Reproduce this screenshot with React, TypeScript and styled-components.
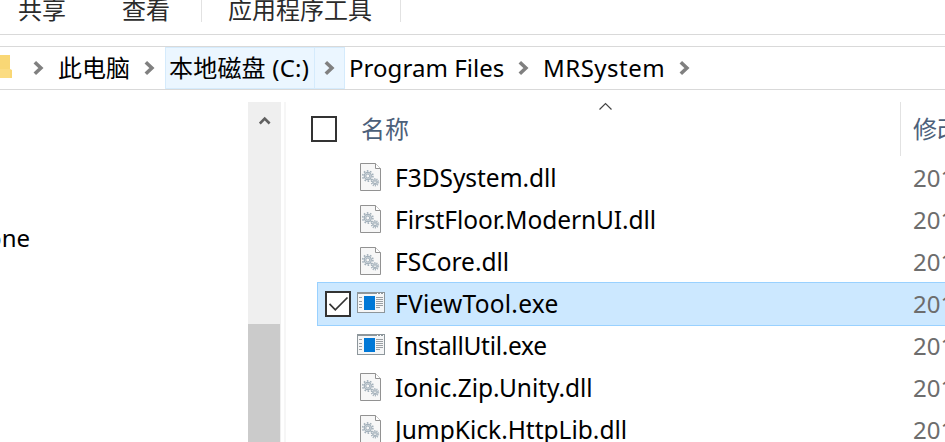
import React from "react";
import styled, { createGlobalStyle, css } from "styled-components";

const Global = createGlobalStyle`
  * { box-sizing: border-box; }
  body {
    margin: 0;
    background: #fff;
    font-family: "Noto Sans", "Noto Sans CJK SC", sans-serif;
    font-size: 24px;
    color: #000;
  }
  svg { display: block; flex: none; }
`;

const Window = styled.div`
  width: 945px;
  height: 442px;
  overflow: hidden;
  display: flex;
  flex-direction: column;
  background: #fff;
  white-space: nowrap;
`;

const Ribbon = styled.header`
  height: 35px;
  flex: none;
  display: flex;
  align-items: flex-start;
  border-bottom: 1px solid #d9d9d9;
  color: #2b2b2b;
`;

const RibbonTab = styled.div<{ $width: number; $inset: number; $divided?: boolean }>`
  width: ${(p) => p.$width}px;
  height: 22px;
  padding-left: ${(p) => p.$inset}px;
  font-family: "Noto Sans CJK SC", sans-serif;
  line-height: 36px;
  ${(p) => p.$divided && css`border-right: 1px solid #e2e2e2;`}
  & > span { display: block; margin-top: -9px; }
`;

const AddressBar = styled.nav`
  height: 44px;
  flex: none;
  margin-top: 11px;
  display: flex;
  align-items: stretch;
  border-top: 1px solid #d9d9d9;
  border-bottom: 1px solid #d9d9d9;
`;

const FolderSlot = styled.div`
  width: 21px;
  padding-top: 8px;
`;

const Crumb = styled.div<{ $width: number; $inset: number; $spacing?: number; $hot?: boolean }>`
  width: ${(p) => p.$width}px;
  padding-left: ${(p) => p.$inset}px;
  line-height: 42px;
  letter-spacing: ${(p) => p.$spacing ?? 0}px;
  ${(p) => p.$hot && css`
    background: #ebf6ff;
    border: 1px solid #d5ebfc;
    line-height: 40px;
  `}
`;

const CrumbArrow = styled.div<{ $width: number; $inset: number; $hot?: boolean }>`
  width: ${(p) => p.$width}px;
  padding-left: ${(p) => p.$inset}px;
  display: flex;
  align-items: center;
  ${(p) => p.$hot && css`
    background: #ebf6ff;
    border: 1px solid #d5ebfc;
    border-left: 0;
  `}
`;

const Content = styled.main`
  flex: 1;
  display: flex;
  margin-top: 12px;
  min-height: 0;
`;

const NavPane = styled.aside`
  width: 248px;
  flex: none;
  padding-top: 115px;
`;

const NavItem = styled.div`
  display: flex;
  justify-content: flex-end;
  width: 30px;
  line-height: 42px;
`;

const ScrollBar = styled.div`
  width: 33px;
  flex: none;
  background: #efefef;
  display: flex;
  flex-direction: column;
`;

const ScrollButton = styled.div`
  height: 222px;
  padding: 14px 0 0 11px;
`;

const ScrollThumb = styled.div`
  flex: 1;
  width: 32px;
  background: #cbcbcb;
`;

const FilePane = styled.section`
  flex: 1;
  margin-left: 3px;
  border-left: 2px solid #f6f6f6;
  min-width: 0;
`;

const HeaderRow = styled.div`
  height: 55px;
  padding-bottom: 1px;
  display: flex;
  color: #4c607a;
  & > * { flex: none; }
`;

const HeaderCheck = styled.div`
  width: 75px;
  padding: 14px 0 0 25px;
`;

const NameHeader = styled.div`
  position: relative;
  width: 540px;
  line-height: 54px;
  border-right: 1px solid #e2e2e2;
`;

const SortMark = styled.div`
  position: absolute;
  left: 238px;
  top: 0;
`;

const DateHeader = styled.div`
  padding-left: 12px;
  line-height: 54px;
`;

const FileRow = styled.div<{ $selected?: boolean }>`
  height: 42px;
  margin-left: 32px;
  display: flex;
  align-items: center;
  & > * { flex: none; }
  ${(p) => p.$selected && css`
    background: #cce8ff;
    box-shadow: 0 0 0 1px #99d1ff;
  `}
`;

const RowCheck = styled.div`
  width: 39px;
  padding-left: 7px;
`;

const IconSlot = styled.div`
  width: 38px;
  display: flex;
  margin-bottom: 2px;
`;

const FileName = styled.div<{ $spacing: number }>`
  width: 518px;
  line-height: 34px;
  font-size: 24.5px;
  letter-spacing: ${(p) => p.$spacing}px;
`;

const FileDate = styled.div`
  line-height: 34px;
  color: #6d6d6d;
`;

const Box = styled.div`
  width: 26px;
  height: 26px;
  border: 2px solid #333;
  background: #fff;
`;

const Chevron = () => (
  <svg width="11" height="16" viewBox="0 0 11 16">
    <path d="M1.8 2.2 7.9 8l-6.1 5.8" fill="none" stroke="#808080" strokeWidth="3.6" />
  </svg>
);

const Folder = () => (
  <svg width="13" height="24" viewBox="0 0 13 24">
    <path d="M0 0h10v14l2 1v8H0z" fill="#f9d775" />
    <path d="M0 14h10v9H0z" fill="#fbdc82" />
  </svg>
);

const Gear = ({ x, y, r }: { x: number; y: number; r: number }) => {
  const tooth = (2 * Math.PI * (r - 0.8)) / 20;
  return (
    <g transform={`translate(${x} ${y})`} fill="none">
      <circle r={r - 0.8} stroke="#a3b0ba" strokeWidth="1.6" strokeDasharray={`${tooth} ${tooth}`} />
      <circle r={r * 0.6} stroke="#a3b0ba" strokeWidth={r * 0.2} fill="#d5dce1" />
      <circle r={r * 0.33} stroke="#94a3af" strokeWidth=".8" fill="#f7f7f7" />
    </g>
  );
};

const DllIcon = () => (
  <svg width="27" height="28" viewBox="-3 0 27 28">
    <path d="M.5.5h15l5 5v22H.5z" fill="#f7f7f7" stroke="#929292" />
    <path d="M15.5.5v5h5" fill="#fff" stroke="#929292" />
    <Gear x={7.8} y={13} r={5.9} />
    <Gear x={15} y={19.2} r={4.2} />
  </svg>
);

const ExeIcon = () => (
  <svg width="28" height="22" viewBox="0 0 28 22" shapeRendering="crispEdges">
    <path d="M.5.5h27v20H.5z" fill="#f5f6f7" stroke="#8d969b" />
    <path d="M0 0h28v2H0z" fill="#8d969b" />
    <path d="M20 1h1M23 1h1M26 1h1" stroke="#fff" />
    <path d="M7 4h11v14H7z" fill="#0078d7" />
    <path d="M2 5.5h3M2 9.5h3M2 12.5h3M2 15.5h3M19 5.5h7M19 7.5h7M19 9.5h7M19 11.5h7M19 13.5h7M19 15.5h4" stroke="#9a9fa3" />
  </svg>
);

const Tick = () => (
  <svg width="22" height="22" viewBox="0 0 22 22">
    <path d="m2.5 10.8 5.8 6L20.5 4.5" fill="none" stroke="#333" strokeWidth="1.7" />
  </svg>
);

type Entry = { name: string; exe?: boolean; selected?: boolean; spacing: number };

const files: Entry[] = [
  { name: "F3DSystem.dll", spacing: -0.04 },
  { name: "FirstFloor.ModernUI.dll", spacing: -0.08 },
  { name: "FSCore.dll", spacing: 0 },
  { name: "FViewTool.exe", exe: true, selected: true, spacing: 0.24 },
  { name: "InstallUtil.exe", exe: true, spacing: -0.28 },
  { name: "Ionic.Zip.Unity.dll", spacing: -0.04 },
  { name: "JumpKick.HttpLib.dll", spacing: 0 },
];

export default function App() {
  return (
    <Window>
      <Global />
      <Ribbon>
        <RibbonTab $width={104} $inset={18}><span>共享</span></RibbonTab>
        <RibbonTab $width={98} $inset={18} $divided><span>查看</span></RibbonTab>
        <RibbonTab $width={199} $inset={26} $divided><span>应用程序工具</span></RibbonTab>
      </Ribbon>
      <AddressBar>
        <FolderSlot><Folder /></FolderSlot>
        <CrumbArrow $width={37} $inset={12}><Chevron /></CrumbArrow>
        <Crumb $width={74} $inset={0}>此电脑</Crumb>
        <CrumbArrow $width={33} $inset={12}><Chevron /></CrumbArrow>
        <Crumb $width={150} $inset={3} $spacing={0.2} $hot>本地磁盘 (C:)</Crumb>
        <CrumbArrow $width={30} $inset={9} $hot><Chevron /></CrumbArrow>
        <Crumb $width={160} $inset={4} $spacing={0.05}>Program Files</Crumb>
        <CrumbArrow $width={38} $inset={13}><Chevron /></CrumbArrow>
        <Crumb $width={123} $inset={0} $spacing={0.5}>MRSystem</Crumb>
        <CrumbArrow $width={30} $inset={13}><Chevron /></CrumbArrow>
      </AddressBar>
      <Content>
        <NavPane><NavItem>one</NavItem></NavPane>
        <ScrollBar>
          <ScrollButton>
            <svg width="12" height="10" viewBox="0 0 12 10">
              <path d="m.8 7.5 4.9-5 4.9 5" fill="none" stroke="#606060" strokeWidth="2.6" />
            </svg>
          </ScrollButton>
          <ScrollThumb />
        </ScrollBar>
        <FilePane>
          <HeaderRow>
            <HeaderCheck><Box /></HeaderCheck>
            <NameHeader>
              名称
              <SortMark>
                <svg width="14" height="8" viewBox="0 0 14 8">
                  <path d="m.5 7.5 6-6 6 6" fill="none" stroke="#444" strokeWidth="1.2" />
                </svg>
              </SortMark>
            </NameHeader>
            <DateHeader>修改</DateHeader>
          </HeaderRow>
          {files.map((f) => (
            <FileRow key={f.name} $selected={f.selected}>
              <RowCheck>{f.selected && <Box><Tick /></Box>}</RowCheck>
              <IconSlot>{f.exe ? <ExeIcon /> : <DllIcon />}</IconSlot>
              <FileName $spacing={f.spacing}>{f.name}</FileName>
              <FileDate>201</FileDate>
            </FileRow>
          ))}
        </FilePane>
      </Content>
    </Window>
  );
}
